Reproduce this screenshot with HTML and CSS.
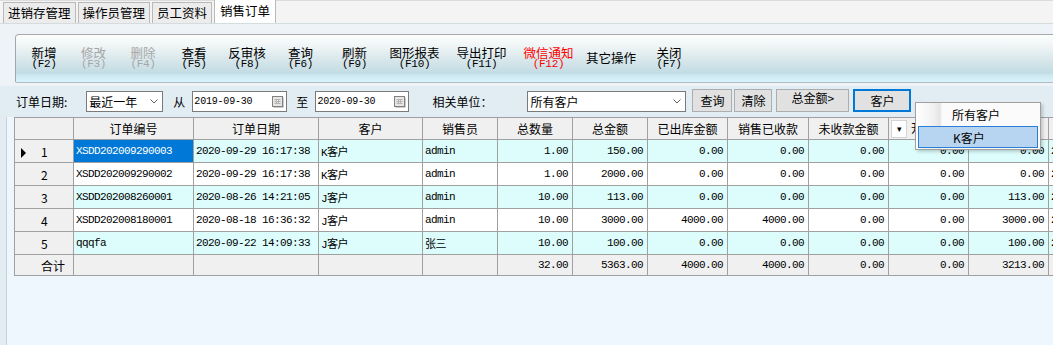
FILE: index.html
```html
<!DOCTYPE html>
<html lang="zh-CN">
<head>
    <meta charset="UTF-8">
    <title>销售订单</title>
    <link rel="stylesheet" href="styles.css">
</head>
<body>
    <!-- Tab strip -->
    <nav class="tabs">
        <div class="tab">进销存管理</div>
        <div class="tab">操作员管理</div>
        <div class="tab">员工资料</div>
        <div class="tab active">销售订单</div>
    </nav>

    <!-- Toolbar -->
    <div class="toolbar-wrap">
        <div class="toolbar">
            <div class="tool"><b>新增</b><i>(F2)</i></div>
            <div class="tool disabled"><b>修改</b><i>(F3)</i></div>
            <div class="tool disabled"><b>删除</b><i>(F4)</i></div>
            <div class="tool"><b>查看</b><i>(F5)</i></div>
            <div class="tool"><b>反审核</b><i>(F8)</i></div>
            <div class="tool"><b>查询</b><i>(F6)</i></div>
            <div class="tool"><b>刷新</b><i>(F9)</i></div>
            <div class="tool"><b>图形报表</b><i>(F10)</i></div>
            <div class="tool"><b>导出打印</b><i>(F11)</i></div>
            <div class="tool red"><b>微信通知</b><i>(F12)</i></div>
            <div class="tool"><b>其它操作</b></div>
            <div class="tool"><b>关闭</b><i>(F7)</i></div>
        </div>
    </div>

    <!-- Filter row -->
    <div class="filter">
        <span class="label">订单日期:</span>
        <div class="select period">
            <span>最近一年</span>
            <svg class="chev" width="8" height="5" viewBox="0 0 8 5"><polyline points="0.5,0.5 4,4 7.5,0.5" fill="none" stroke="#606060"/></svg>
        </div>
        <span class="label from">从</span>
        <div class="date from-date">
            <span>2019-09-30</span>
            <svg class="cal" width="12" height="12" viewBox="0 0 12 12"><rect x="1.5" y="1.5" width="10" height="10" fill="#9a9a9a"/><rect x="0.5" y="0.5" width="10" height="10" fill="#e6e6e6" stroke="#808080"/><path d="M2.5 3.5h6M2.5 5.5h6M2.5 7.5h6M4.5 3v5M6.5 3v5" stroke="#b4b4b4"/></svg>
        </div>
        <span class="label to">至</span>
        <div class="date to-date">
            <span>2020-09-30</span>
            <svg class="cal" width="12" height="12" viewBox="0 0 12 12"><rect x="1.5" y="1.5" width="10" height="10" fill="#9a9a9a"/><rect x="0.5" y="0.5" width="10" height="10" fill="#e6e6e6" stroke="#808080"/><path d="M2.5 3.5h6M2.5 5.5h6M2.5 7.5h6M4.5 3v5M6.5 3v5" stroke="#b4b4b4"/></svg>
        </div>
        <span class="label unit">相关单位：</span>
        <div class="select customer">
            <span>所有客户</span>
            <svg class="chev" width="8" height="5" viewBox="0 0 8 5"><polyline points="0.5,0.5 4,4 7.5,0.5" fill="none" stroke="#606060"/></svg>
        </div>
        <div class="btn b-query">查询</div>
        <div class="btn b-clear">清除</div>
        <div class="btn b-total">总金额&gt;</div>
        <div class="btn b-cust">客户</div>
    </div>

    <!-- Grid -->
    <div class="grid-panel">
        <table class="grid">
            <colgroup>
                <col style="width:59px"><col style="width:120px"><col style="width:125px"><col style="width:104px">
                <col style="width:75px"><col style="width:75px"><col style="width:75px"><col style="width:80px">
                <col style="width:81px"><col style="width:80px"><col style="width:80px"><col style="width:80px">
                <col style="width:120px">
            </colgroup>
            <thead>
                <tr>
                    <th></th>
                    <th>订单编号</th>
                    <th>订单日期</th>
                    <th>客户</th>
                    <th>销售员</th>
                    <th>总数量</th>
                    <th>总金额</th>
                    <th>已出库金额</th>
                    <th>销售已收款</th>
                    <th>未收款金额</th>
                    <th class="left"><span class="drop">▾</span>开票</th>
                    <th>未开票</th>
                    <th>交货日期</th>
                </tr>
            </thead>
            <tbody>
                <tr class="odd">
                    <td class="rh"><span class="arrow"></span>1</td>
                    <td class="sel">XSDD202009290003</td>
                    <td>2020-09-29 16:17:38</td>
                    <td>K客户</td>
                    <td>admin</td>
                    <td class="num">1.00</td>
                    <td class="num">150.00</td>
                    <td class="num">0.00</td>
                    <td class="num">0.00</td>
                    <td class="num">0.00</td>
                    <td class="num">0.00</td>
                    <td class="num">0.00</td>
                    <td>2</td>
                </tr>
                <tr>
                    <td class="rh">2</td>
                    <td>XSDD202009290002</td>
                    <td>2020-09-29 16:17:38</td>
                    <td>K客户</td>
                    <td>admin</td>
                    <td class="num">1.00</td>
                    <td class="num">2000.00</td>
                    <td class="num">0.00</td>
                    <td class="num">0.00</td>
                    <td class="num">0.00</td>
                    <td class="num">0.00</td>
                    <td class="num">0.00</td>
                    <td>2</td>
                </tr>
                <tr class="odd">
                    <td class="rh">3</td>
                    <td>XSDD202008260001</td>
                    <td>2020-08-26 14:21:05</td>
                    <td>J客户</td>
                    <td>admin</td>
                    <td class="num">10.00</td>
                    <td class="num">113.00</td>
                    <td class="num">0.00</td>
                    <td class="num">0.00</td>
                    <td class="num">0.00</td>
                    <td class="num">0.00</td>
                    <td class="num">113.00</td>
                    <td>2</td>
                </tr>
                <tr>
                    <td class="rh">4</td>
                    <td>XSDD202008180001</td>
                    <td>2020-08-18 16:36:32</td>
                    <td>J客户</td>
                    <td>admin</td>
                    <td class="num">10.00</td>
                    <td class="num">3000.00</td>
                    <td class="num">4000.00</td>
                    <td class="num">4000.00</td>
                    <td class="num">0.00</td>
                    <td class="num">0.00</td>
                    <td class="num">3000.00</td>
                    <td>2</td>
                </tr>
                <tr class="odd">
                    <td class="rh">5</td>
                    <td>qqqfa</td>
                    <td>2020-09-22 14:09:33</td>
                    <td>J客户</td>
                    <td>张三</td>
                    <td class="num">10.00</td>
                    <td class="num">100.00</td>
                    <td class="num">0.00</td>
                    <td class="num">0.00</td>
                    <td class="num">0.00</td>
                    <td class="num">0.00</td>
                    <td class="num">100.00</td>
                    <td>2</td>
                </tr>
                <tr class="total">
                    <td class="rh">合计</td>
                    <td></td>
                    <td></td>
                    <td></td>
                    <td></td>
                    <td class="num">32.00</td>
                    <td class="num">5363.00</td>
                    <td class="num">4000.00</td>
                    <td class="num">4000.00</td>
                    <td class="num">0.00</td>
                    <td class="num">0.00</td>
                    <td class="num">3213.00</td>
                    <td></td>
                </tr>
            </tbody>
        </table>
    </div>

    <!-- Customer dropdown menu -->
    <div class="menu">
        <div class="menu-item">所有客户</div>
        <div class="menu-item active">K客户</div>
    </div>
</body>
</html>
```

FILE: styles.css
```css
/* Global */
body {
    margin: 0;
    width: 1053px;
    height: 345px;
    overflow: hidden;
    font-family: "Noto Sans CJK SC", sans-serif;
    font-size: 12px;
    color: #000;
    background: #e2edf3;
}

/* Tab strip */
.tabs {
    display: flex;
    align-items: flex-end;
    height: 24px;
    padding-left: 3px;
    box-sizing: border-box;
    background: #f4f4f4;
    border-top: 1px solid #dcdcdc;
    border-bottom: 1px solid #d4dce0;
}

.tab {
    height: 20px;
    line-height: 20px;
    padding: 0 4px;
    margin-right: 2px;
    border: 1px solid #b9b9b9;
    border-bottom: none;
    background: #ececec;
    font-size: 12.5px;
}

.tab.active {
    height: 23px;
    line-height: 21px;
    padding: 0 5px;
    background: #fff;
}

/* Toolbar */
.toolbar-wrap {
    padding: 10px 0 3px 15px;
    background: #edf3f6;
}

.toolbar {
    display: grid;
    grid-template-columns: 50px 49px 50px 52px 54px 53px 55px 65px 69px 65px 60px 56px;
    align-items: center;
    height: 49px;
    padding-left: 3px;
    box-sizing: border-box;
    border-top: 1px solid #a9a9a9;
    border-left: 1px solid #9fa9ae;
    border-bottom: 1px solid #b4bcc0;
    border-top-left-radius: 4px;
    border-bottom-left-radius: 2px;
    background: linear-gradient(to bottom, #fdfefe 0%, #eef4f5 25%, #d6e6ea 55%, #c3dce4 80%, #cfeaf3 87%, #d6f2fc 100%);
}

.tool {
    text-align: center;
    margin-top: -2px;
}

.tool b {
    display: block;
    font-weight: normal;
    font-size: 12.5px;
    line-height: 13px;
}

.tool i {
    display: block;
    font-style: normal;
    font-family: "Liberation Mono", monospace;
    font-size: 11px;
    letter-spacing: -0.3px;
    line-height: 11px;
}

.tool.disabled {
    color: #a6a6a6;
}

.tool.red {
    color: #ff0000;
}

/* Filter row */
.filter {
    display: flex;
    align-items: center;
    height: 31px;
    padding-left: 16px;
}

.label {
    white-space: nowrap;
}

.select,
.date {
    display: flex;
    align-items: center;
    height: 21px;
    box-sizing: border-box;
    border: 1px solid #7a7a7a;
    background: #fff;
    padding-left: 2px;
}

.select .chev {
    margin-left: auto;
    margin-right: 4px;
}

.period {
    width: 77px;
    margin-left: 19px;
}

.customer {
    width: 159px;
    margin-left: 35px;
}

.from {
    margin-left: 10px;
}

.to {
    margin-left: 9px;
}

.unit {
    margin-left: 23px;
}

.date {
    padding-left: 1px;
    font-family: "Liberation Mono", monospace;
    font-size: 10px;
    letter-spacing: -0.2px;
}

.date .cal {
    margin-left: auto;
    margin-right: 2px;
}

.from-date {
    width: 95px;
    margin-left: 7px;
}

.to-date {
    width: 94px;
    margin-left: 7px;
}

.btn {
    display: flex;
    align-items: center;
    justify-content: center;
    height: 23px;
    box-sizing: border-box;
    border: 1px solid #adadad;
    background: #e1e1e1;
    margin-top: -2px;
}

.b-query {
    width: 40px;
    margin-left: 6px;
}

.b-clear {
    width: 38px;
    margin-left: 2px;
}

.b-total {
    width: 73px;
    margin-left: 4px;
    align-items: flex-start;
    line-height: 16px;
}

.b-cust {
    width: 58px;
    margin-left: 4px;
    border: 2px solid #0078d7;
}

/* Grid */
.grid-panel {
    height: 228px;
    margin-left: 6px;
    padding-left: 7px;
    border-left: 1px solid #c8d2d8;
    background: #eef6fe;
    overflow: hidden;
}

.grid {
    border-collapse: collapse;
    table-layout: fixed;
    width: 1099px;
    font-family: "Liberation Mono", "Noto Sans CJK SC", monospace;
    font-size: 11px;
    letter-spacing: -0.6px;
}

.grid th,
.grid td {
    border: 1px solid #a0a0a0;
    padding: 0 2px;
    white-space: nowrap;
    overflow: hidden;
}

.grid th {
    height: 21px;
    background: #f0f0f0;
    font-family: "Noto Sans CJK SC", sans-serif;
    font-size: 12px;
    font-weight: normal;
    letter-spacing: 0;
    text-align: center;
}

.grid th.left {
    text-align: left;
}

.drop {
    display: inline-block;
    width: 14px;
    height: 16px;
    line-height: 16px;
    margin: 0 4px 0 0;
    background: #fff;
    border: 1px solid #d4d4d4;
    font-size: 9px;
    text-align: center;
    vertical-align: middle;
}

.grid td {
    height: 22px;
    background: #fff;
}

.grid tr.odd td {
    background: #ddfdfd;
}

.grid tr.total td {
    height: 20px;
    background: #f0f0f0;
}

.grid td.num {
    text-align: right;
    padding-right: 4px;
}

.grid td.rh {
    background: #f0f0f0;
    padding-left: 26px;
    font-family: "Noto Sans CJK SC", sans-serif;
    font-size: 12px;
    letter-spacing: 0;
}

.grid tr.odd td.rh {
    background: #f0f0f0;
}

.grid td.sel,
.grid tr.odd td.sel {
    background: #0078d7;
    color: #fff;
}

.arrow {
    display: inline-block;
    width: 0;
    height: 0;
    margin-left: -20px;
    margin-right: 15px;
    border-top: 5px solid transparent;
    border-bottom: 5px solid transparent;
    border-left: 5px solid #000;
    vertical-align: -1px;
}

/* Dropdown menu over the grid */
.menu {
    position: absolute;
    left: 915px;
    top: 102px;
    width: 126px;
    height: 48px;
    box-sizing: border-box;
    padding: 1px;
    border: 1px solid #a0a0a0;
    background: linear-gradient(to right, #ffffff 0px, #f0f0f0 18px, #e4e4e4 24px, #fbfbfb 26px, #fbfbfb 100%);
    box-shadow: 2px 2px 3px rgba(0, 0, 0, 0.18);
}

.menu-item {
    height: 22px;
    line-height: 21px;
    padding-left: 35px;
    box-sizing: border-box;
}

.menu-item.active {
    margin: 0 1px;
    padding-left: 34px;
    border: 1px solid #2a7fd4;
    background: #b7d5f1;
}
```
